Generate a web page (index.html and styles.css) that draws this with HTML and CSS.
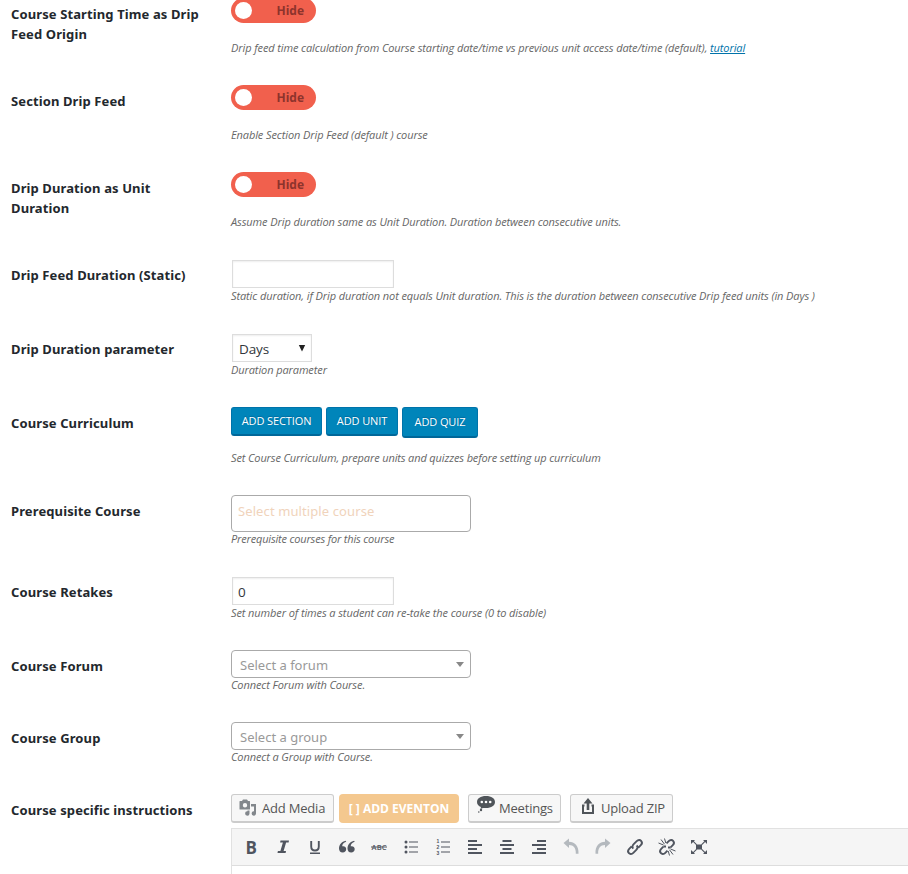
FILE: index.html
```html
<!DOCTYPE html>
<html lang="en">
<head>
<meta charset="utf-8">
<title>Course Settings</title>
<link rel="stylesheet" href="styles.css">
</head>
<body>
<main class="settings">
  <section class="row h87">
    <div class="label">Course Starting Time as Drip Feed Origin</div>
    <div class="field"><div class="toggle"><span class="knob"></span><span>Hide</span></div>
    <p class="desc spaced">Drip feed time calculation from Course starting date/time vs previous unit access date/time (default), <a href="#">tutorial</a></p></div>
  </section>
  <section class="row h87">
    <div class="label">Section Drip Feed</div>
    <div class="field"><div class="toggle"><span class="knob"></span><span>Hide</span></div>
    <p class="desc spaced">Enable Section Drip Feed (default ) course</p></div>
  </section>
  <section class="row h87">
    <div class="label">Drip Duration as Unit Duration</div>
    <div class="field"><div class="toggle"><span class="knob"></span><span>Hide</span></div>
    <p class="desc spaced">Assume Drip duration same as Unit Duration. Duration between consecutive units.</p></div>
  </section>
  <section class="row h74">
    <div class="label">Drip Feed Duration (Static)</div>
    <div class="field"><div class="input"></div>
    <p class="desc">Static duration, if Drip duration not equals Unit duration. This is the duration between consecutive Drip feed units (in Days )</p></div>
  </section>
  <section class="row h74">
    <div class="label">Drip Duration parameter</div>
    <div class="field"><div class="input days"><span>Days</span><svg width="8" height="7" viewBox="0 0 8 7"><path d="M.8 0h6.400L4 6.500z" fill="#222"/></svg></div>
    <p class="desc">Duration parameter</p></div>
  </section>
  <section class="row h88">
    <div class="label">Course Curriculum</div>
    <div class="field"><div class="actions"><span class="primary section">ADD SECTION</span><span class="primary unit">ADD UNIT</span><span class="primary quiz">ADD QUIZ</span></div>
    <p class="desc after-actions">Set Course Curriculum, prepare units and quizzes before setting up curriculum</p></div>
  </section>
  <section class="row h81">
    <div class="label">Prerequisite Course</div>
    <div class="field"><div class="combo multi">Select multiple course</div>
    <p class="desc tight narrow">Prerequisite courses for this course</p></div>
  </section>
  <section class="row h74">
    <div class="label">Course Retakes</div>
    <div class="field"><div class="input">0</div>
    <p class="desc">Set number of times a student can re-take the course (0 to disable)</p></div>
  </section>
  <section class="row h72">
    <div class="label">Course Forum</div>
    <div class="field"><div class="combo"><span>Select a forum</span><i class="arrow"></i></div>
    <p class="desc tight">Connect Forum with Course.</p></div>
  </section>
  <section class="row h72">
    <div class="label">Course Group</div>
    <div class="field"><div class="combo"><span>Select a group</span><i class="arrow"></i></div>
    <p class="desc tight">Connect a Group with Course.</p></div>
  </section>
  <section class="row">
    <div class="label">Course specific instructions</div>
    <div class="field">
      <div class="media">
        <span class="btn add-media"><svg width="18" height="18" viewBox="0 0 18 18" fill="#82878c"><path fill-rule="evenodd" d="M1 2h2l1-1.500h4L9 2h1.500q.5 0 .5.500V10q0 .500-.500.500H1Q.500 10.500.500 10V2.500Q.500 2 1 2zm5 2a2.200 2.200 0 1 0 0 4.400A2.200 2.200 0 0 0 6 4z"/><path d="M12 5h5v9.500a2.200 2.200 0 1 1-2-2.200V7.500h-3zM10.500 11.500v3a2.200 2.200 0 1 1-2-2.200v-.800z"/></svg><span>Add Media</span></span>
        <span class="btn eventon">[ ] ADD EVENTON</span>
        <span class="btn meetings"><svg width="20" height="20" viewBox="0 0 20 20"><path d="M10 1c5.500 0 9 2.500 9 6s-3.500 6-9 6l-3 0-2.500 1 .5-2C2.500 11 1 9.500 1 7c0-3.500 3.500-6 9-6z" fill="#50555a"/><circle cx="5.800" cy="7" r="1.300" fill="#fff"/><circle cx="10" cy="7" r="1.300" fill="#fff"/><circle cx="14.200" cy="7" r="1.300" fill="#fff"/><circle cx="5" cy="15" r="1.200" fill="#50555a"/><circle cx="2.800" cy="17" r=".8" fill="#50555a"/></svg><span>Meetings</span></span>
        <span class="btn upload"><svg width="14" height="17" viewBox="0 0 14 17"><path d="M7 0l4.500 5.500H8.300V12H5.700V5.500H2.500z" fill="#50555a"/><path d="M3.500 7.500H2V15h10V7.500h-1.500" fill="none" stroke="#50555a" stroke-width="2"/></svg><span>Upload ZIP</span></span>
      </div>
      <div class="editor">
        <div class="toolbar">
          <svg viewBox="0 0 20 20"><text class="bold" x="4.600" y="16.500">B</text></svg>
          <svg viewBox="0 0 20 20"><path d="M7.500 3.500H16l-.4 1.900h-2.500L10.600 14H13l-.4 1.900H4.500l.4-1.900h2.500L9.900 5.400H7.100z"/></svg>
          <svg viewBox="0 0 20 20"><path class="line" d="M6.200 4v5.500c0 2.800 1.300 4 3.800 4s3.800-1.200 3.800-4V4"/><path d="M5 15.500h10V17H5z"/></svg>
          <svg viewBox="0 0 20 20"><path d="M9.200 4.800c-2.500.7-4 2.500-4 4.500 2-.6 4 .5 4 2.800 0 2-1.500 3.500-3.500 3.500-2.300 0-3.700-1.800-3.700-4.100 0-3.800 2.800-6.900 6.600-7.700zM17.700 4.800c-2.500.7-4 2.500-4 4.500 2-.6 4 .5 4 2.800 0 2-1.500 3.500-3.500 3.500-2.300 0-3.700-1.800-3.700-4.100 0-3.800 2.800-6.900 6.600-7.700z"/></svg>
          <svg viewBox="0 0 20 20"><text class="abc" x="2.500" y="12.800" textLength="15">ABC</text><path d="M2 9.500h16v1H2z"/></svg>
          <svg viewBox="0 0 20 20"><circle cx="5" cy="5" r="1.500"/><circle cx="5" cy="10" r="1.500"/><circle cx="5" cy="15" r="1.500"/><path d="M8 4.500h9v1H8zm0 5h9v1H8zm0 5h9v1H8z"/></svg>
          <svg viewBox="0 0 20 20"><path d="M8 4.500h9v1H8zm0 5h9v1H8zm0 5h9v1H8z"/><text class="num" x="3.400" y="6">1</text><text class="num" x="3.400" y="12">2</text><text class="num" x="3.400" y="18">3</text></svg>
          <svg viewBox="0 0 20 20"><path d="M3 3h9v2H3zm0 4h14v2H3zm0 4h9v2H3zm0 4h14v2H3z"/></svg>
          <svg viewBox="0 0 20 20"><path d="M5.500 3h9v2h-9zM3 7h14v2H3zm2.500 4h9v2h-9zM3 15h14v2H3z"/></svg>
          <svg viewBox="0 0 20 20"><path d="M8 3h9v2H8zM3 7h14v2H3zm5 4h9v2H8zm-5 4h14v2H3z"/></svg>
          <svg class="off" viewBox="0 0 20 20"><path d="M8 1.500v3.200c5.500 0 10 4 9.500 12h-2.700c.3-6-2.300-8.800-6.800-8.800V11L2.500 6z"/></svg>
          <svg class="off" viewBox="0 0 20 20"><path d="M12 1.500v3.200C6.500 4.700 2 8.700 2.500 16.700h2.700C4.900 10.700 7.500 7.900 12 7.900V11l5.500-5z"/></svg>
          <svg viewBox="0 0 20 20"><path class="line" d="M8.300 11.700c-1.500-1.500-.8-3.300.4-4.500l3-3c1.500-1.500 3.400-1.500 4.400-.4s1.200 2.900-.3 4.400l-2.400 2.400M11.700 8.300c1.500 1.500.8 3.300-.4 4.500l-3 3c-1.500 1.500-3.400 1.500-4.400.4s-1.200-2.900.3-4.400l2.400-2.400"/></svg>
          <svg viewBox="0 0 20 20"><path class="line" d="M9.500 6.400l2.200-2.200c1.500-1.500 3.400-1.500 4.400-.4s1.200 2.900-.3 4.400l-2.200 2.200M10.500 13.600l-2.200 2.200c-1.500 1.500-3.400 1.500-4.400.4s-1.200-2.900.3-4.400l2.200-2.200M13.500 10.500H11M6.500 9.500H9"/><path class="thin" d="M7.500 1.500L8.800 6M4 2.500l3.500 4.700M1.500 6l5 2M12.500 18.500L11.200 14M16 17.500l-3.500-4.700M18.500 14l-5-2"/></svg>
          <svg viewBox="0 0 20 20"><path d="M7 7.500h6v5H7zM2 3h4L4.900 4.300l3 3-.8.800-3-3L2 7zM18 3v4l-1.900-1.900-3 3-.8-.8 3-3L14 3zM2 17v-4l2.100 1.900 3-3 .8.800-3 3L6 17zM18 17h-4l1.300-1.300-3-3 .8-.8 3 3L18 13z"/></svg>
        </div>
      </div>
    </div>
  </section>
</main>
</body>
</html>
```
FILE: styles.css
```css
* { box-sizing: border-box; }
body { margin: 0; height: 874px; overflow: hidden; background: #fff; color: #23282d; font-family: "Open Sans", "Noto Sans", sans-serif; font-size: 13px; }
.settings { margin-top: -2px; }
.row { display: grid; grid-template-columns: 220px 1fr; padding-left: 11px; }
.h87 { height: 87px; }
.h74 { height: 74px; }
.h88 { height: 88px; }
.h81 { height: 81px; }
.h72 { height: 72px; }
.label { padding: 6px 28px 0 0; font: 700 13px/20px "Noto Sans", sans-serif; letter-spacing: .11px; }
.desc { margin: 0; font-size: 11px; line-height: 16px; font-style: italic; color: #666; white-space: nowrap; letter-spacing: -.1px; }
.desc a { color: #0073aa; }
.spaced { margin-top: 17px; }
.tight { margin-top: -1px; }
.narrow { letter-spacing: -.18px; }
.after-actions { margin-top: 12px; letter-spacing: -.13px; }
.toggle { display: flex; align-items: center; justify-content: space-between; width: 85px; height: 25px; padding: 0 12px 0 4px; border-radius: 13px; background: #f1604d; color: #8d332c; font-size: 12px; font-weight: 700; }
.knob { width: 17px; height: 17px; border-radius: 50%; background: #fff; }
.input { width: 162px; height: 28px; margin: 1px 0 0 1px; padding: 0 5px; border: 1px solid #ddd; box-shadow: inset 0 1px 2px rgba(0, 0, 0, .07); color: #32373c; font-size: 13.5px; line-height: 28px; }
.days { display: flex; justify-content: space-between; width: 80px; padding-left: 6px; letter-spacing: -.1px; }
.days svg { margin-top: 10px; }
.actions { display: flex; align-items: flex-start; gap: 4px; height: 31px; }
.primary { height: 29px; border: 1px solid #0073aa; border-bottom: 2px solid #006799; border-radius: 3px; background: #0085ba; color: #fff; text-align: center; font-size: 11px; line-height: 26px; letter-spacing: -.1px; text-shadow: 0 -1px 1px #006799; white-space: nowrap; }
.section { width: 91px; }
.unit { width: 72px; }
.quiz { width: 76px; height: 31px; line-height: 28px; }
.combo { display: flex; align-items: center; justify-content: space-between; width: 240px; height: 28px; padding: 1px 6px 0 8px; border: 1px solid #aaa; border-radius: 4px; color: #999; font-family: "Noto Sans", sans-serif; font-size: 13px; }
.multi { height: 37px; padding: 0 6px 5px; color: #f0d3bb; letter-spacing: .1px; }
.arrow { border: 4px solid transparent; border-top: 5px solid #888; border-bottom: 0; }
.media { display: flex; height: 34px; }
.btn { display: flex; align-items: center; height: 29px; border: 1px solid #ccc; border-bottom-width: 2px; border-radius: 3px; background: #f7f7f7; color: #555; font-size: 13px; letter-spacing: -.2px; white-space: nowrap; }
.add-media { width: 103px; padding-left: 7px; gap: 5px; }
.eventon { justify-content: center; width: 120px; margin: 0 9px 0 5px; border: 0; border-radius: 4px; background: #f4c88f; color: #fff; font-size: 12px; font-weight: 700; letter-spacing: 0; }
.meetings { width: 93px; padding-left: 7px; gap: 3px; }
.meetings svg { margin-top: -7px; }
.upload { width: 103px; margin-left: 9px; padding-left: 10px; gap: 6px; }
.upload svg { margin-top: -4px; }
.editor { height: 60px; border: solid #e1e1e1; border-width: 1px 0 0 1px; }
.toolbar { display: flex; gap: 12px; height: 37px; padding: 8px 0 0 9px; background: #f5f5f5; border-bottom: 1px solid #ddd; }
.toolbar svg { flex: none; width: 20px; height: 20px; fill: #50555f; }
.toolbar .line { fill: none; stroke: #50555f; stroke-width: 1.9; }
.toolbar .thin { fill: none; stroke: #50555f; stroke-width: 1; }
.toolbar .off { fill: #b4b9be; }
.bold { font: 700 17px "Open Sans", sans-serif; }
.abc { font: 600 7.5px "Open Sans", sans-serif; }
.num { font: 700 5px "Liberation Sans", sans-serif; }
```
